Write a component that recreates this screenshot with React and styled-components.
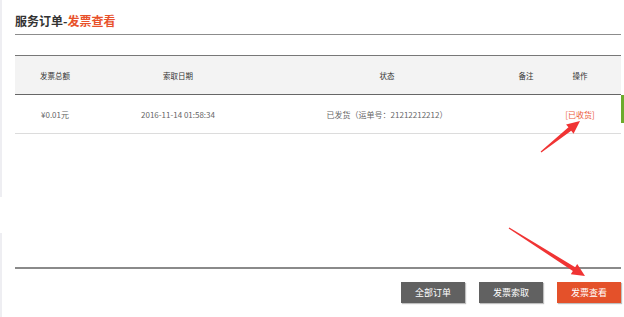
import React from "react";
import styled, { createGlobalStyle } from "styled-components";

const GlobalStyle = createGlobalStyle`
  html, body {
    margin: 0;
    padding: 0;
    background: #fff;
  }
  body {
    font-family: "Noto Sans CJK SC", "Noto Sans", sans-serif;
    background-image: linear-gradient(#eeeef2, #eeeef2), linear-gradient(#eeeef2, #eeeef2);
    background-size: 2px 197px, 2px 100px;
    background-position: 0 0, 0 233px;
    background-repeat: no-repeat;
  }
`;

const Page = styled.div`
  position: relative;
  width: 624px;
  height: 317px;
  box-sizing: border-box;
  padding: 13px 3px 0 15px;
  display: flex;
  flex-direction: column;
`;

const Title = styled.h2`
  margin: 0;
  height: 21px;
  font-size: 12px;
  line-height: 15px;
  font-weight: bold;
  color: #333;
  border-bottom: 1px solid #8c8c8c;
  span {
    color: #e8512a;
  }
`;

const Table = styled.div`
  margin-top: 20px;
  border-top: 1px solid #777;
`;

const Row = styled.div`
  position: relative;
  display: grid;
  grid-template-columns: 80px 166px 252px 26px 82px;
  height: 38px;
  align-items: center;
  background: ${(p) => (p.$head ? "#f3f3f3" : "#fff")};
  border-bottom: 1px solid ${(p) => (p.$head ? "#666" : "#dcdcdc")};
  ${(p) =>
    p.$marked &&
    `
    &::after {
      content: "";
      position: absolute;
      right: -3px;
      top: 0;
      width: 3px;
      height: 28px;
      background: #6cab2c;
    }
  `}
`;

const Cell = styled.div`
  text-align: center;
  white-space: nowrap;
  font-size: ${(p) => (p.$head ? "7.5px" : "8px")};
  color: ${(p) => (p.$head ? "#333" : p.$accent ? "#ec5a3c" : "#666")};
`;

const Spacer = styled.div`
  flex: 1;
`;

const Footer = styled.div`
  border-top: 2px solid #8a8a8a;
  height: 48px;
  box-sizing: border-box;
  padding-top: 13px;
  margin-bottom: 2px;
  display: flex;
  justify-content: flex-end;
  gap: 14px;
`;

const Button = styled.button`
  width: 64px;
  height: 21px;
  border: none;
  padding: 0;
  background: ${(p) => (p.$primary ? "#e4512a" : "#616161")};
  color: #fff;
  font-family: inherit;
  font-size: 9px;
  box-shadow: 1px 1px 1px rgba(0, 0, 0, 0.25);
`;

const Overlay = styled.svg`
  position: absolute;
  top: 0;
  left: 0;
  pointer-events: none;
`;

function arrowPoints([tx, ty], [px, py]) {
  const len = Math.hypot(px - tx, py - ty);
  const dx = (px - tx) / len;
  const dy = (py - ty) / len;
  const nx = -dy;
  const ny = dx;
  const head = 13;
  const bx = px - dx * head;
  const by = py - dy * head;
  const pts = [
    [tx + nx * 0.6, ty + ny * 0.6],
    [bx + nx * 2.2, by + ny * 2.2],
    [bx + nx * 6, by + ny * 6],
    [px, py],
    [bx - nx * 6, by - ny * 6],
    [bx - nx * 2.2, by - ny * 2.2],
    [tx - nx * 0.6, ty - ny * 0.6],
  ];
  return pts.map((p) => p.join(",")).join(" ");
}

const headers = ["发票总额", "索取日期", "状态", "备注", "操作"];

export default function App() {
  return (
    <>
      <GlobalStyle />
      <Page>
        <Title>
          服务订单-<span>发票查看</span>
        </Title>
        <Table>
          <Row $head>
            {headers.map((h) => (
              <Cell $head key={h}>
                {h}
              </Cell>
            ))}
          </Row>
          <Row $marked>
            <Cell>¥0.01元</Cell>
            <Cell>2016-11-14 01:58:34</Cell>
            <Cell>已发货（运单号：21212212212）</Cell>
            <Cell></Cell>
            <Cell $accent>[已收货]</Cell>
          </Row>
        </Table>
        <Spacer />
        <Footer>
          <Button>全部订单</Button>
          <Button>发票索取</Button>
          <Button $primary>发票查看</Button>
        </Footer>
        <Overlay width="624" height="317" viewBox="0 0 624 317">
          <polygon points={arrowPoints([541, 152], [580, 121])} fill="#f03434" />
          <polygon points={arrowPoints([509, 228], [585, 276])} fill="#f03434" />
        </Overlay>
      </Page>
    </>
  );
}
